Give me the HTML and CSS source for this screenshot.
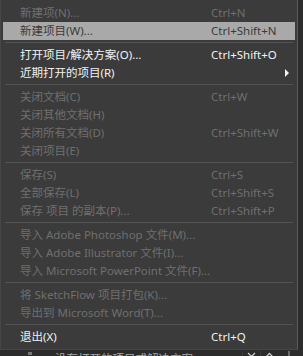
FILE: index.html
```html
<!DOCTYPE html>
<html lang="zh-CN">

<head>
    <meta charset="UTF-8">
    <meta name="viewport" content="width=device-width, initial-scale=1.0">
    <title>文件菜单</title>
    <link rel="stylesheet" href="styles.css">
</head>

<body>

    <div class="screen">
        <div class="menu">
            <div class="item disabled"><span>新建项(N)...</span><span class="key">Ctrl+N</span></div>
            <div class="item hover"><span>新建项目(W)...</span><span class="key">Ctrl+Shift+N</span></div>
            <div class="sep"></div>
            <div class="item"><span>打开项目/解决方案(O)...</span><span class="key">Ctrl+Shift+O</span></div>
            <div class="item"><span>近期打开的项目(R)</span><span class="key arrow"></span></div>
            <div class="sep"></div>
            <div class="item disabled"><span>关闭文档(C)</span><span class="key">Ctrl+W</span></div>
            <div class="item disabled"><span>关闭其他文档(H)</span><span class="key"></span></div>
            <div class="item disabled"><span>关闭所有文档(D)</span><span class="key">Ctrl+Shift+W</span></div>
            <div class="item disabled"><span>关闭项目(E)</span><span class="key"></span></div>
            <div class="sep"></div>
            <div class="item disabled"><span>保存(S)</span><span class="key">Ctrl+S</span></div>
            <div class="item disabled"><span>全部保存(L)</span><span class="key">Ctrl+Shift+S</span></div>
            <div class="item disabled"><span>保存 项目 的副本(P)...</span><span class="key">Ctrl+Shift+P</span></div>
            <div class="sep"></div>
            <div class="item disabled"><span>导入 Adobe Photoshop 文件(M)...</span><span class="key"></span></div>
            <div class="item disabled"><span>导入 Adobe Illustrator 文件(I)...</span><span class="key"></span></div>
            <div class="item disabled"><span>导入 Microsoft PowerPoint 文件(F)...</span><span class="key"></span></div>
            <div class="sep"></div>
            <div class="item disabled"><span>将 SketchFlow 项目打包(K)...</span><span class="key"></span></div>
            <div class="item disabled"><span>导出到 Microsoft Word(T)...</span><span class="key"></span></div>
            <div class="sep"></div>
            <div class="item"><span>退出(X)</span><span class="key">Ctrl+Q</span></div>
        </div>

        <div class="status">
            <span class="mark"></span>
            <span class="status-text">没有打开的项目或解决方案</span>
            <span class="btn">
                <svg width="9" height="6" viewBox="0 0 9 6"><path d="M1 1 L4.5 4.5 L8 1" fill="none" stroke="#c8c8c8" stroke-width="1.3"/></svg>
            </span>
            <span class="btn">
                <svg width="9" height="6" viewBox="0 0 9 6"><path d="M1 5 L4.5 1.5 L8 5" fill="none" stroke="#c8c8c8" stroke-width="1.3"/></svg>
            </span>
            <span class="tick"></span>
        </div>
    </div>

</body>

</html>
```

FILE: styles.css
```css
body, html {
    margin: 0;
    padding: 0;
    background-color: #2c2c2c;
    font-family: 'Noto Sans', 'Noto Sans CJK SC', sans-serif;
    font-size: 11.5px;
    color: #f2f2f2;
}

.screen {
    width: 303px;
    height: 356px;
    overflow: hidden;
}

.menu {
    width: 292px;
    padding: 4px 2px 3px;
    background-color: #3b3b3b;
    border: 1px solid #464646;
    border-top: none;
    border-right-color: #5a5a5a;
}

.item {
    display: grid;
    grid-template-columns: 191px 1fr;
    height: 18px;
    line-height: 18px;
    padding: 0 5px 0 17px;
    white-space: nowrap;
}

.item.disabled {
    color: #6f6f6f;
}

.item.hover {
    background-color: #a9a9a9;
    color: #3a3a3a;
}

.arrow {
    display: flex;
    justify-content: flex-end;
    align-items: center;
    padding-right: 1px;
}

.arrow::after {
    content: "";
    border-left: 4px solid #f2f2f2;
    border-top: 4px solid transparent;
    border-bottom: 4px solid transparent;
}

.sep {
    height: 1px;
    margin: 2px 2px 3px;
    background-color: #545454;
}

.status {
    display: flex;
    align-items: flex-start;
    height: 7px;
    padding-top: 1px;
    overflow: hidden;
    color: #a8a8a8;
    line-height: 16px;
}

.mark {
    width: 4px;
    height: 3px;
    margin: 1px 23px 0 28px;
    background-color: #777;
}

.status-text {
    flex: 1;
}

.btn {
    display: flex;
    justify-content: center;
    width: 17px;
    padding-top: 1px;
    border-left: 1px solid #3a3a3a;
}

.tick {
    width: 2px;
    height: 6px;
    margin: 0 13px 0 10px;
    background-color: #6a6a6a;
}
```
